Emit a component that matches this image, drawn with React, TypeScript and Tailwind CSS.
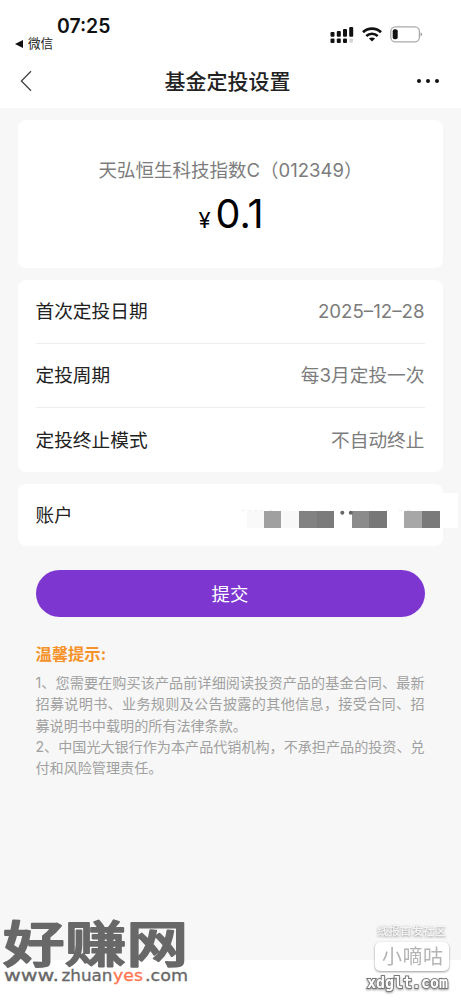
import React from "react";

const rows = [
  { label: "首次定投日期", value: "2025–12–28" },
  { label: "定投周期", value: "每3月定投一次" },
  { label: "定投终止模式", value: "不自动终止" },
];

const tips = [
  { text: "1、您需要在购买该产品前详细阅读投资产品的基金合同、最新", full: true },
  { text: "招募说明书、业务规则及公告披露的其他信息，接受合同、招", full: true },
  { text: "募说明书中载明的所有法律条款。", full: false },
  { text: "2、中国光大银行作为本产品代销机构，不承担产品的投资、兑", full: true },
  { text: "付和风险管理责任。", full: false },
];

function Signal() {
  return (
    <svg width="24" height="18" viewBox="0 0 24 18" fill="#111">
      <rect x="0.5" y="6" width="4" height="4.8" rx="1" />
      <rect x="6.8" y="5" width="4" height="5.8" rx="1" />
      <rect x="13" y="3" width="4" height="7.8" rx="1" />
      <rect x="19.2" y="1" width="4" height="9.8" rx="1" />
      <rect x="0.5" y="12.6" width="4" height="4.4" rx="1" />
      <rect x="6.8" y="12.6" width="4" height="4.4" rx="1" />
      <rect x="13" y="12.6" width="4" height="4.4" rx="1" />
      <rect x="19.4" y="12.6" width="3.6" height="4.2" rx="1" fill="#d4d4d4" />
    </svg>
  );
}

function Wifi() {
  return (
    <svg width="20" height="15" viewBox="0 0 20 15" fill="none" stroke="#111" strokeWidth="2.7">
      <path d="M1 5.3C6 .5 14 .5 19 5.3" />
      <path d="M4.3 9C7.6 6 12.4 6 15.7 9" />
      <path d="M10 14.6 6.9 11.6Q10 9.2 13.1 11.6Z" fill="#111" stroke="none" />
    </svg>
  );
}

function Battery() {
  return (
    <svg width="33" height="17" viewBox="0 0 33 17">
      <rect x="0.8" y="0.8" width="28.6" height="15" rx="4.6" fill="#fff" stroke="#aaa" strokeWidth="1.3" />
      <rect x="2.7" y="3.2" width="5" height="10" rx="2" fill="#111" />
      <path d="M30.6 6.2q3 2 0 4.2z" fill="#999" />
    </svg>
  );
}

function Mosaic() {
  return (
    <svg width="216" height="38" viewBox="0 0 216 38" shapeRendering="crispEdges">
      <rect x="188" y="1" width="28" height="35" fill="#fff" />
      <rect x="5" y="19" width="17" height="17" fill="#f9f9f9" />
      <rect x="22" y="19" width="17" height="17" fill="#a0a0a0" />
      <rect x="39" y="19" width="18" height="17" fill="#f8f8f8" />
      <rect x="57" y="19" width="18" height="17" fill="#828282" />
      <rect x="75" y="19" width="17" height="17" fill="#7b7b7b" />
      <rect x="110" y="19" width="17" height="17" fill="#8b8b8b" />
      <rect x="127" y="19" width="18" height="17" fill="#777" />
      <rect x="162" y="19" width="18" height="17" fill="#a7a7a7" />
      <rect x="180" y="19" width="18" height="17" fill="#7a7a7a" />
      <path d="M0 18.5h3m4 0h2m3 0h3m3 0h3m6 0h3m30 0h2m82 0h3m10 0h3m4 0h5" stroke="#eee" />
      <g fill="#666" shapeRendering="auto">
        <circle cx="100.3" cy="20.7" r="2" />
        <circle cx="108.8" cy="20.7" r="2" />
      </g>
    </svg>
  );
}

export default function App() {
  return (
    <div className="relative flex h-[1000px] w-[461px] flex-col overflow-hidden bg-white font-['Inter','Noto_Sans_CJK_SC',sans-serif] text-[#222]">
      <header className="h-[108px] shrink-0">
        <div className="flex h-[54px] justify-between">
          <div className="pt-[15px]">
            <div className="pl-[57px] text-[19.4px] leading-[22px] font-semibold text-[#111]">07:25</div>
            <div className="flex items-center gap-[5px] pl-[15px] text-[12.6px] leading-[14px]">
              <svg width="8" height="8" viewBox="0 0 8 8">
                <path d="M0 4 8 0v8z" fill="#111" />
              </svg>
              微信
            </div>
          </div>
          <div className="flex items-start pt-[26px] pr-[38px]">
            <Signal />
            <div className="pt-px pl-[8px]">
              <Wifi />
            </div>
            <div className="pl-[8px]">
              <Battery />
            </div>
          </div>
        </div>
        <div className="flex h-[54px] items-center justify-between pr-[21px] pl-[20px]">
          <svg width="20" height="22" viewBox="0 0 20 22" fill="none" stroke="#444" strokeWidth="1.3">
            <path d="M11 1.2 1.4 11 11 20.8" />
          </svg>
          <h1 className="mt-[2px] pr-[1px] text-[21px] leading-[30px] font-medium">基金定投设置</h1>
          <svg width="24" height="6" viewBox="0 0 24 6" fill="#111">
            <circle cx="3" cy="3" r="2" />
            <circle cx="12" cy="3" r="2" />
            <circle cx="21" cy="3" r="2" />
          </svg>
        </div>
      </header>

      <main className="flex h-[852px] shrink-0 flex-col bg-[#f7f7f7] pt-[12px] pr-[18.5px] pl-[17.5px]">
        <section className="flex h-[148px] shrink-0 flex-col items-center rounded-[8px] bg-white pt-[36px]">
          <div className="pl-[1px] text-[18.5px] leading-[28px] whitespace-nowrap text-[#7c7c7c]">天弘恒生科技指数C（012349）</div>
          <div className="flex items-baseline gap-[5px] pt-[7px] pl-[2px] leading-[46px] text-black">
            <span className="text-[22px]">¥</span>
            <span className="text-[39.5px]">0.1</span>
          </div>
        </section>

        <section className="mt-[12px] h-[192px] shrink-0 divide-y divide-[#eee] rounded-[8px] bg-white px-[18px]">
          {rows.map((row) => (
            <div key={row.label} className="flex h-[64px] items-center justify-between pt-px text-[18.7px] leading-[28px]">
              <span>{row.label}</span>
              <span className="text-[#7c7c7c]">{row.value}</span>
            </div>
          ))}
        </section>

        <section className="relative mt-[12px] flex h-[62px] shrink-0 items-center rounded-[8px] bg-white px-[18px] pt-px text-[18.6px]">
          账户
          <div className="absolute top-[8px] left-[224.5px]">
            <Mosaic />
          </div>
        </section>

        <div className="px-[18px] pt-[24px]">
          <button className="block h-[47px] w-full rounded-full bg-[#7d36d0] pt-[3px] text-[18.4px] text-white">提交</button>
          <h2 className="pt-[25px] text-[16.3px] leading-[24px] font-bold text-[#f6922a]">温馨提示:</h2>
          <div className="pt-[6px] text-[14.1px] leading-[21.3px] text-[#a0a0a0]">
            {tips.map((line) => (
              <p key={line.text} className={line.full ? "whitespace-nowrap [text-align-last:justify]" : "whitespace-nowrap"}>
                {line.text}
              </p>
            ))}
          </div>
        </div>
      </main>

      <div className="absolute top-[920px] left-[3px]">
        <svg width="190" height="70" viewBox="0 0 190 70" fill="#686868" className="overflow-visible">
          <text transform="translate(0 41.5) scale(1 .8)" fontFamily="Noto Sans CJK SC" fontWeight="500" fontSize="61.5" textLength="185" stroke="#686868" strokeWidth="2.4" strokeLinejoin="round">好赚网</text>
          <g fontFamily="DejaVu Sans" fontSize="15.5" stroke="#686868" strokeWidth=".3">
            <text x="1" y="60.5" textLength="55" lengthAdjust="spacingAndGlyphs">www.</text>
            <text x="58.5" y="60.5" textLength="51" lengthAdjust="spacingAndGlyphs">zhuan</text>
            <text x="110" y="60.5" textLength="30" lengthAdjust="spacingAndGlyphs" fill="#ff7650" stroke="#ff7650">yes</text>
            <text x="142" y="60.5" textLength="43" lengthAdjust="spacingAndGlyphs">.com</text>
          </g>
        </svg>
      </div>

      <div className="absolute top-[920px] left-[364px]">
        <svg width="90" height="76" viewBox="0 0 90 76" className="drop-shadow-[0_1px_1px_rgba(0,0,0,0.4)]">
          <text x="13" y="15" fontFamily="Noto Sans CJK SC" fontWeight="500" fontSize="11.5" textLength="69" fill="#f5f5f5">线报首发社区</text>
          <rect x="11" y="22" width="74" height="29" rx="5" fill="#fff" />
          <text x="18" y="44" fontFamily="Noto Sans CJK SC" fontSize="20" textLength="61" fill="#b4b4b4">小嘀咕</text>
          <text x="3" y="68" fontFamily="DejaVu Sans Mono" fontWeight="700" fontSize="15" textLength="81" lengthAdjust="spacingAndGlyphs" fill="#fff" stroke="#777" strokeWidth="1.8" paintOrder="stroke">xdglt.com</text>
        </svg>
      </div>
    </div>
  );
}
